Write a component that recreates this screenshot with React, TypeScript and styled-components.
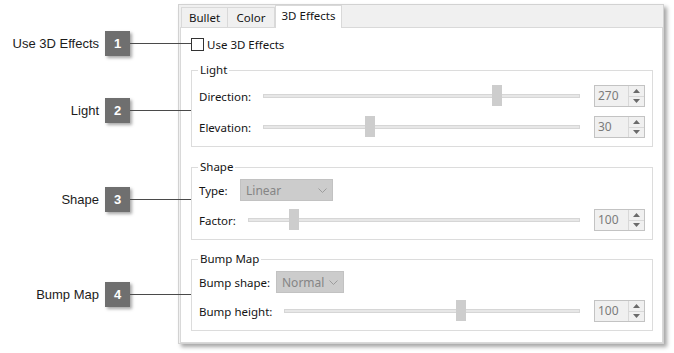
import styled, { createGlobalStyle } from 'styled-components';

const GlobalStyle = createGlobalStyle`
  body {
    margin: 0;
    background: #ffffff;
  }
`

const Page = styled.div`
  display: flex;
  width: 674px;
  height: 353px;
  overflow: hidden;
`

const CalloutColumn = styled.div`
  position: relative;
  z-index: 1;
  display: flex;
  flex-direction: column;
  width: 178px;
  flex-shrink: 0;
`

const CalloutRow = styled.div<{ $gap: number }>`
  display: flex;
  align-items: center;
  width: 191px;
  height: 25px;
  margin-top: ${p => p.$gap}px;
`

const CalloutLabel = styled.span`
  flex: 1;
  padding-right: 6px;
  text-align: right;
  font-family: "Liberation Sans", Arial, sans-serif;
  font-size: 13px;
  color: #1c1c1c;
  white-space: nowrap;
`

const Badge = styled.div`
  display: flex;
  align-items: center;
  justify-content: center;
  width: 25px;
  height: 25px;
  background: #6f6f6f;
  box-shadow: 2px 2px 3px rgba(0, 0, 0, 0.35);
  color: #ffffff;
  font-family: "Liberation Sans", Arial, sans-serif;
  font-weight: bold;
  font-size: 13px;
`

const Leader = styled.div`
  width: 61px;
  height: 1px;
  background: #4a4a4a;
`

const Dialog = styled.div`
  display: flex;
  flex-direction: column;
  box-sizing: border-box;
  width: 486px;
  height: 340px;
  margin-top: 4px;
  border: 1px solid #d2d2d2;
  background: #f0f0f0;
  box-shadow: 3px 3px 4px rgba(0, 0, 0, 0.35);
  font-family: "Noto Sans", "Segoe UI", sans-serif;
  font-size: 11.5px;
  color: #141414;
`

const TabStrip = styled.div`
  display: flex;
  align-items: flex-end;
  height: 22px;
  padding-left: 2px;
`

const Tab = styled.div<{ $width: number; $active?: boolean }>`
  position: relative;
  box-sizing: border-box;
  display: flex;
  align-items: center;
  justify-content: center;
  width: ${p => p.$width}px;
  height: ${p => (p.$active ? 23 : 20)}px;
  margin-bottom: ${p => (p.$active ? -1 : 0)}px;
  padding-bottom: ${p => (p.$active ? 3 : 0)}px;
  border: 1px solid #d9d9d9;
  border-left-width: ${p => (p.$active ? 1 : 0)}px;
  border-bottom: ${p => (p.$active ? 'none' : '0')};
  background: ${p => (p.$active ? '#ffffff' : '#f0f0f0')};
  &:first-child {
    border-left-width: 1px;
  }
`

const Panel = styled.div`
  flex: 1;
  display: flex;
  flex-direction: column;
  margin-left: 1px;
  padding: 10px 9px 0 10px;
  border: 1px solid #d9d9d9;
  background: #ffffff;
`

const CheckRow = styled.label`
  display: flex;
  align-items: center;
  gap: 3px;
  height: 13px;
`

const CheckBox = styled.span`
  box-sizing: border-box;
  width: 13px;
  height: 13px;
  border: 1px solid #333333;
  background: #ffffff;
`

const Group = styled.fieldset<{ $top: number; $pad: number; $gap: number }>`
  display: flex;
  flex-direction: column;
  gap: ${p => p.$gap}px;
  margin: ${p => p.$top}px 0 0 0;
  padding: ${p => p.$pad}px 7px 8px 7px;
  border: 1px solid #dcdcdc;
  min-width: 0;
`

const Legend = styled.legend`
  margin-left: -1px;
  padding: 0 2px;
  line-height: 16px;
`

const Row = styled.div<{ $label: number }>`
  display: grid;
  grid-template-columns: ${p => p.$label}px 1fr 51px;
  column-gap: 6px;
  align-items: center;
  height: 22px;
`

const SelectRow = styled.div<{ $label: number }>`
  display: grid;
  grid-template-columns: ${p => p.$label}px auto;
  justify-content: start;
  align-items: center;
  height: 22px;
`

const FieldLabel = styled.span`
  white-space: nowrap;
`

const SliderBox = styled.div`
  display: flex;
  align-items: center;
  height: 22px;
  padding: 0 8px;
`

const Track = styled.div`
  position: relative;
  flex: 1;
  box-sizing: border-box;
  height: 4px;
  border: 1px solid #d6d6d6;
  background: #e7e7e7;
`

const Thumb = styled.div`
  position: absolute;
  top: -10px;
  width: 10px;
  height: 21px;
  margin-left: -5px;
  background: #cdcdcd;
`

const Spinner = styled.div`
  box-sizing: border-box;
  display: flex;
  width: 51px;
  height: 22px;
  border: 1px solid #c3c3c3;
  background: #f0f0f0;
`

const SpinValue = styled.span`
  flex: 1;
  padding-left: 3px;
  line-height: 20px;
  color: #7b7b7b;
  font-size: 12px;
`

const SpinButtons = styled.div`
  display: flex;
  flex-direction: column;
  width: 15px;
  border-left: 1px solid #d8d8d8;
`

const SpinButton = styled.div`
  flex: 1;
  display: flex;
  align-items: center;
  justify-content: center;
  & + & {
    border-top: 1px solid #d8d8d8;
  }
`

const Dropdown = styled.div<{ $width: number }>`
  box-sizing: border-box;
  display: flex;
  align-items: center;
  justify-content: space-between;
  width: ${p => p.$width}px;
  height: 22px;
  padding: 0 5px 0 5px;
  border: 1px solid #c2c2c2;
  background: #cccccc;
  color: #858585;
  font-size: 12px;
`

function Arrow({ up }: { up?: boolean }) {
  return (
    <svg width="7" height="4" viewBox="0 0 7 4">
      <path d={up ? 'M0 4 L3.5 0 L7 4 Z' : 'M0 0 L3.5 4 L7 0 Z'} fill="#6a6a6a" />
    </svg>
  )
}

function Chevron() {
  return (
    <svg width="9" height="5" viewBox="0 0 9 5">
      <path d="M0.5 0.5 L4.5 4.5 L8.5 0.5" fill="none" stroke="#9c9c9c" strokeWidth="1" />
    </svg>
  )
}

function Spin({ value }: { value: number }) {
  return (
    <Spinner>
      <SpinValue>{value}</SpinValue>
      <SpinButtons>
        <SpinButton><Arrow up /></SpinButton>
        <SpinButton><Arrow /></SpinButton>
      </SpinButtons>
    </Spinner>
  )
}

function SliderRow({ label, labelWidth, pos, value }: { label: string; labelWidth: number; pos: number; value: number }) {
  return (
    <Row $label={labelWidth}>
      <FieldLabel>{label}</FieldLabel>
      <SliderBox>
        <Track>
          <Thumb style={{ left: `${pos * 100}%` }} />
        </Track>
      </SliderBox>
      <Spin value={value} />
    </Row>
  )
}

const callouts = [
  { n: 1, text: 'Use 3D Effects', gap: 31 },
  { n: 2, text: 'Light', gap: 42 },
  { n: 3, text: 'Shape', gap: 64 },
  { n: 4, text: 'Bump Map', gap: 70 },
]

export default function App() {
  return (
    <Page>
      <GlobalStyle />
      <CalloutColumn>
        {callouts.map(c => (
          <CalloutRow key={c.n} $gap={c.gap}>
            <CalloutLabel>{c.text}</CalloutLabel>
            <Badge>{c.n}</Badge>
            <Leader />
          </CalloutRow>
        ))}
      </CalloutColumn>
      <Dialog>
        <TabStrip>
          <Tab $width={47}>Bullet</Tab>
          <Tab $width={47}>Color</Tab>
          <Tab $width={67} $active>3D Effects</Tab>
        </TabStrip>
        <Panel>
          <CheckRow>
            <CheckBox />
            <span>Use 3D Effects</span>
          </CheckRow>
          <Group $top={11} $pad={7} $gap={9}>
            <Legend>Light</Legend>
            <SliderRow label="Direction:" labelWidth={50} pos={0.741} value={270} />
            <SliderRow label="Elevation:" labelWidth={50} pos={0.338} value={30} />
          </Group>
          <Group $top={12} $pad={4} $gap={8}>
            <Legend>Shape</Legend>
            <SelectRow $label={41}>
              <FieldLabel>Type:</FieldLabel>
              <Dropdown $width={93}>Linear<Chevron /></Dropdown>
            </SelectRow>
            <SliderRow label="Factor:" labelWidth={35} pos={0.136} value={100} />
          </Group>
          <Group $top={11} $pad={4} $gap={7}>
            <Legend>Bump Map</Legend>
            <SelectRow $label={77}>
              <FieldLabel>Bump shape:</FieldLabel>
              <Dropdown $width={68}>Normal<Chevron /></Dropdown>
            </SelectRow>
            <SliderRow label="Bump height:" labelWidth={71} pos={0.598} value={100} />
          </Group>
        </Panel>
      </Dialog>
    </Page>
  );
}
